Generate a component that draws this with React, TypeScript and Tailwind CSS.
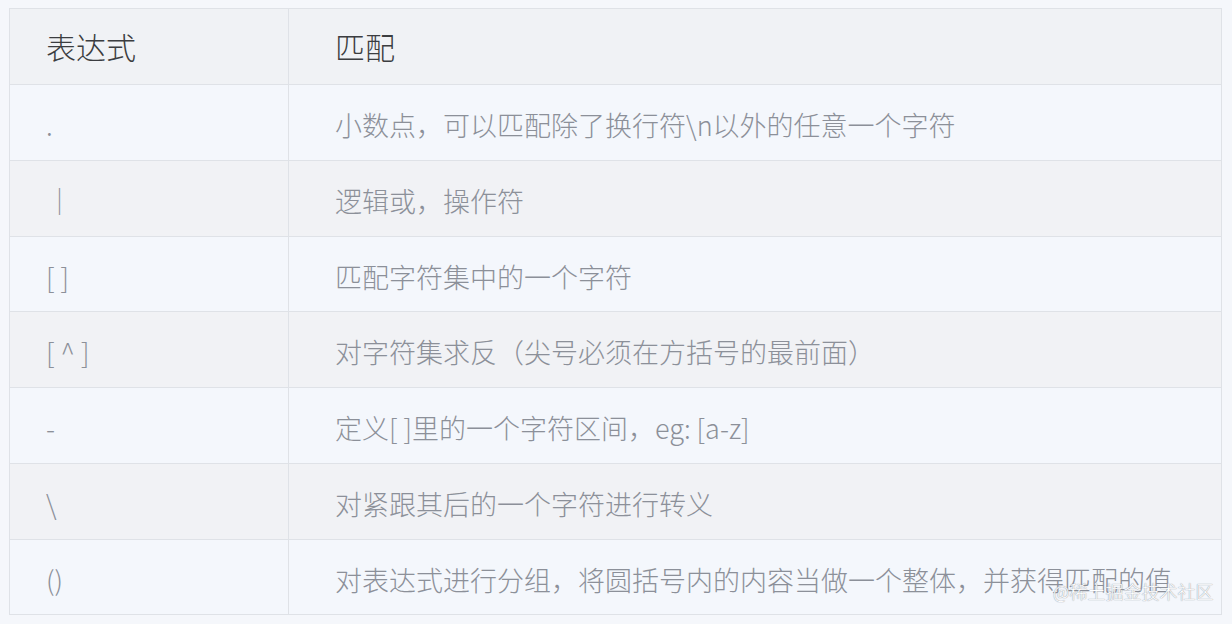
import React from "react";

const rows: [string, string][] = [
  [".", "小数点，可以匹配除了换行符\\n以外的任意一个字符"],
  ["｜", "逻辑或，操作符"],
  ["[ ]", "匹配字符集中的一个字符"],
  ["[ ^ ]", "对字符集求反（尖号必须在方括号的最前面）"],
  ["-", "定义[ ]里的一个字符区间，eg: [a-z]"],
  ["\\", "对紧跟其后的一个字符进行转义"],
  ["()", "对表达式进行分组，将圆括号内的内容当做一个整体，并获得匹配的值"],
];

export default function App() {
  return (
    <div
      className="relative w-[1232px] h-[624px] bg-[#f5f7fb] pt-[8px] pl-[9px] overflow-hidden"
      style={{ fontFamily: '"Noto Sans CJK SC", "Noto Sans", sans-serif' }}
    >
      <table className="w-[1213px] border-collapse border border-[#dfe2e7]">
        <tbody>
          <tr className="h-[76px] bg-[#f0f2f5]">
            <td className="w-[279px] border border-[#dfe2e7] pl-[36px] text-[30px] font-light text-[#3b3d40] align-middle">
              表达式
            </td>
            <td className="border border-[#dfe2e7] pl-[46px] text-[30px] font-light text-[#3b3d40] align-middle">
              匹配
            </td>
          </tr>
          {rows.map(([a, b], i) => (
            <tr
              key={i}
              className={
                i % 2 === 0
                  ? "h-[75.75px] bg-[#f4f7fc]"
                  : "h-[75.75px] bg-[#f1f2f5]"
              }
            >
              <td className="border border-[#dfe2e7] pl-[36px] text-[27px] font-light text-[#8c9099] align-middle pt-[6px]">
                {a}
              </td>
              <td className="border border-[#dfe2e7] pl-[46px] text-[27px] font-light text-[#8c9099] align-middle pt-[6px] whitespace-nowrap">
                {b}
              </td>
            </tr>
          ))}
        </tbody>
      </table>
      <div
        className="absolute left-[1053px] top-[582px] text-[18px] font-light text-white leading-none"
        style={{ textShadow: "0 0 1px #9aa0aa, 0 0 1px #9aa0aa" }}
      >
        @稀土掘金技术社区
      </div>
    </div>
  );
}
